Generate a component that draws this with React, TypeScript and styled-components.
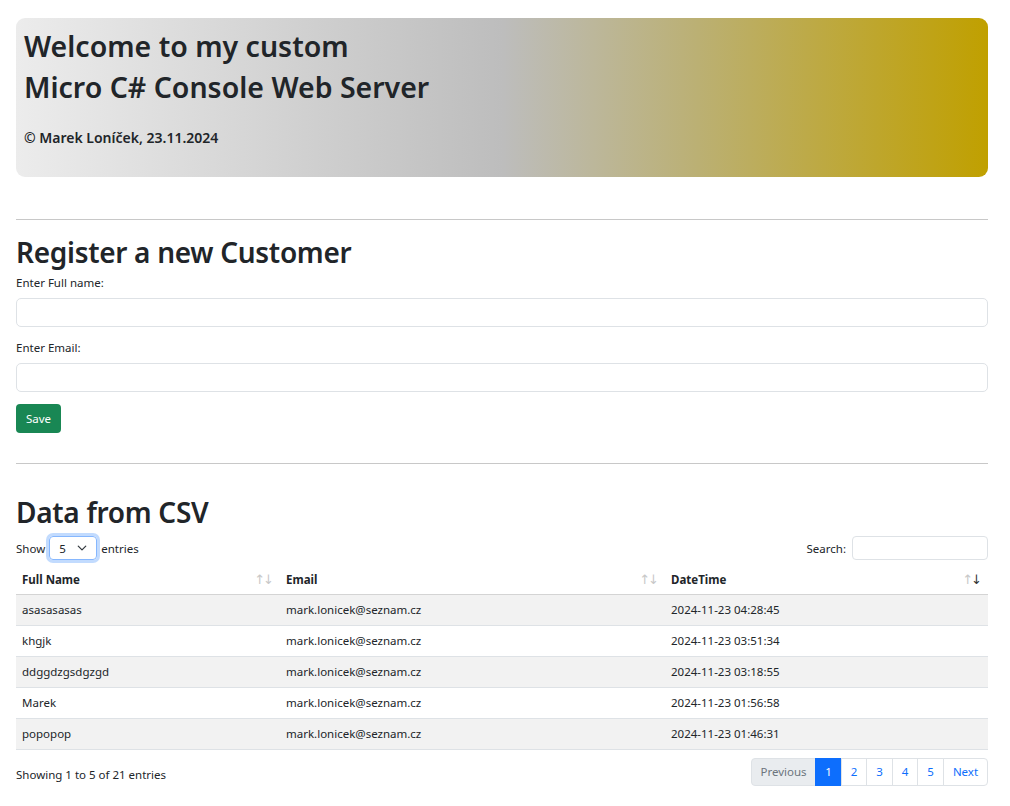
import * as React from 'react';
import styled, { createGlobalStyle } from 'styled-components';

const GlobalStyle = createGlobalStyle`
  html, body {
    margin: 0;
    padding: 0;
    background: #fff;
  }
  body {
    font-family: "Noto Sans", "Open Sans", sans-serif;
    color: #212529;
  }
  * {
    box-sizing: border-box;
  }
`;

const Page = styled.div`
  width: 972px;
  margin: 18px 0 0 16px;
`;

const Banner = styled.header`
  height: 159px;
  padding: 8px 8px;
  border-radius: 9px;
  background: linear-gradient(to right, #ececec 0%, #bdbdbd 50%, #bbb074 70%, #c0a000 100%);
`;

const BannerTitle = styled.h2`
  margin: 0;
  font-size: 28.5px;
  font-weight: 600;
  line-height: 41px;
`;

const BannerSign = styled.p`
  margin: 20px 0 0;
  font-size: 14px;
  font-weight: 600;
`;

const Rule = styled.hr<{ $top: number }>`
  margin: ${(p) => p.$top}px 0 0;
  border: 0;
  border-top: 1px solid #c8c8c8;
`;

const SectionTitle = styled.h2<{ $top: number }>`
  margin: ${(p) => p.$top}px 0 0;
  font-size: 28px;
  font-weight: 600;
  letter-spacing: -0.3px;
  line-height: 36px;
`;

const Field = styled.div`
  display: flex;
  flex-direction: column;
`;

const Label = styled.label<{ $top: number }>`
  margin-top: ${(p) => p.$top}px;
  font-size: 11.5px;
  line-height: 16px;
`;

const Input = styled.input`
  margin-top: 7px;
  height: 29px;
  width: 100%;
  border: 1px solid #dee2e6;
  border-radius: 5px;
  background: #fff;
`;

const SaveButton = styled.button`
  margin-top: 12px;
  height: 29px;
  padding: 0 10px;
  border: 0;
  border-radius: 4px;
  background: #198754;
  color: #fff;
  font-family: inherit;
  font-size: 11.5px;
`;

const Toolbar = styled.div`
  margin-top: 6px;
  display: flex;
  align-items: center;
  justify-content: space-between;
  font-size: 11.5px;
  height: 24px;
`;

const Group = styled.div`
  display: flex;
  align-items: center;
  gap: 3px;
`;

const Select = styled.div`
  display: flex;
  align-items: center;
  justify-content: space-between;
  width: 48px;
  height: 24px;
  padding: 0 9px;
  border: 1px solid #86b7fe;
  border-radius: 4px;
  box-shadow: 0 0 0 3px rgba(13, 110, 253, 0.25);
  margin: 0 1px;
`;

const SearchBox = styled.input`
  width: 136px;
  height: 24px;
  border: 1px solid #dee2e6;
  border-radius: 4px;
  margin-left: 3px;
`;

const Table = styled.table`
  margin-top: 5px;
  width: 100%;
  border-collapse: collapse;
  font-size: 11.5px;
`;

const HeadCell = styled.th<{ $w: number }>`
  width: ${(p) => p.$w}px;
  height: 29px;
  padding: 0 6px;
  text-align: left;
  font-weight: 700;
  border-bottom: 1px solid #d4d4d4;
`;

const HeadInner = styled.div`
  display: flex;
  justify-content: space-between;
  align-items: center;
`;

const Arrows = styled.span`
  font-size: 13px;
  letter-spacing: -2px;
  padding-right: 2px;
  color: #c8c8c8;
  font-weight: 400;
  font-family: "DejaVu Sans", sans-serif;
`;

const Arrow = styled.span<{ $on?: boolean }>`
  color: ${(p) => (p.$on ? '#333' : '#c8c8c8')};
`;

const Row = styled.tr<{ $odd: boolean }>`
  background: ${(p) => (p.$odd ? '#f2f2f2' : '#fff')};
`;

const Cell = styled.td`
  height: 31px;
  padding: 0 6px;
  border-bottom: 1px solid #dee2e6;
`;

const Footer = styled.div`
  margin-top: 8px;
  display: flex;
  justify-content: space-between;
  align-items: flex-start;
  font-size: 11.5px;
`;

const Info = styled.span`
  padding-top: 9px;
  line-height: 16px;
`;

const Pager = styled.div`
  display: flex;
`;

const PageItem = styled.span<{ $w: number; $active?: boolean; $disabled?: boolean }>`
  width: ${(p) => p.$w}px;
  height: 28px;
  display: flex;
  align-items: center;
  justify-content: center;
  border: 1px solid #dee2e6;
  margin-left: -1px;
  color: ${(p) => (p.$active ? '#fff' : p.$disabled ? '#6c757d' : '#0d6efd')};
  background: ${(p) => (p.$active ? '#0d6efd' : p.$disabled ? '#e9ecef' : '#fff')};
  border-color: ${(p) => (p.$active ? '#0d6efd' : '#dee2e6')};
  &:first-child {
    border-radius: 4px 0 0 4px;
    margin-left: 0;
  }
  &:last-child {
    border-radius: 0 4px 4px 0;
  }
`;

const rows = [
  ['asasasasas', 'mark.lonicek@seznam.cz', '2024-11-23 04:28:45'],
  ['khgjk', 'mark.lonicek@seznam.cz', '2024-11-23 03:51:34'],
  ['ddggdzgsdgzgd', 'mark.lonicek@seznam.cz', '2024-11-23 03:18:55'],
  ['Marek', 'mark.lonicek@seznam.cz', '2024-11-23 01:56:58'],
  ['popopop', 'mark.lonicek@seznam.cz', '2024-11-23 01:46:31'],
];

const Chevron = () => (
  <svg width="10" height="10" viewBox="0 0 16 16">
    <path d="M2 5l6 6 6-6" fill="none" stroke="#343a40" strokeWidth="2" strokeLinecap="round" strokeLinejoin="round" />
  </svg>
);

export default function App() {
  return (
    <Page>
      <GlobalStyle />
      <Banner>
        <BannerTitle>Welcome to my custom</BannerTitle>
        <BannerTitle>Micro C# Console Web Server</BannerTitle>
        <BannerSign>© Marek Loníček, 23.11.2024</BannerSign>
      </Banner>

      <Rule $top={42} />
      <SectionTitle $top={14}>Register a new Customer</SectionTitle>
      <Field>
        <Label $top={5}>Enter Full name:</Label>
        <Input />
      </Field>
      <Field>
        <Label $top={13}>Enter Email:</Label>
        <Input />
      </Field>
      <SaveButton>Save</SaveButton>

      <Rule $top={30} />
      <SectionTitle $top={30}>Data from CSV</SectionTitle>
      <Toolbar>
        <Group>
          Show
          <Select>
            5 <Chevron />
          </Select>
          entries
        </Group>
        <Group>
          Search:
          <SearchBox />
        </Group>
      </Toolbar>
      <Table>
        <thead>
          <tr>
            <HeadCell $w={264}>
              <HeadInner>
                Full Name<Arrows>↑↓</Arrows>
              </HeadInner>
            </HeadCell>
            <HeadCell $w={385}>
              <HeadInner>
                Email<Arrows>↑↓</Arrows>
              </HeadInner>
            </HeadCell>
            <HeadCell $w={323}>
              <HeadInner>
                DateTime
                <Arrows>
                  <Arrow>↑</Arrow>
                  <Arrow $on>↓</Arrow>
                </Arrows>
              </HeadInner>
            </HeadCell>
          </tr>
        </thead>
        <tbody>
          {rows.map((r, i) => (
            <Row key={i} $odd={i % 2 === 0}>
              {r.map((c, j) => (
                <Cell key={j}>{c}</Cell>
              ))}
            </Row>
          ))}
        </tbody>
      </Table>
      <Footer>
        <Info>Showing 1 to 5 of 21 entries</Info>
        <Pager>
          <PageItem $w={65} $disabled>Previous</PageItem>
          <PageItem $w={27} $active>1</PageItem>
          <PageItem $w={26}>2</PageItem>
          <PageItem $w={27}>3</PageItem>
          <PageItem $w={26}>4</PageItem>
          <PageItem $w={27}>5</PageItem>
          <PageItem $w={45}>Next</PageItem>
        </Pager>
      </Footer>
    </Page>
  );
}
